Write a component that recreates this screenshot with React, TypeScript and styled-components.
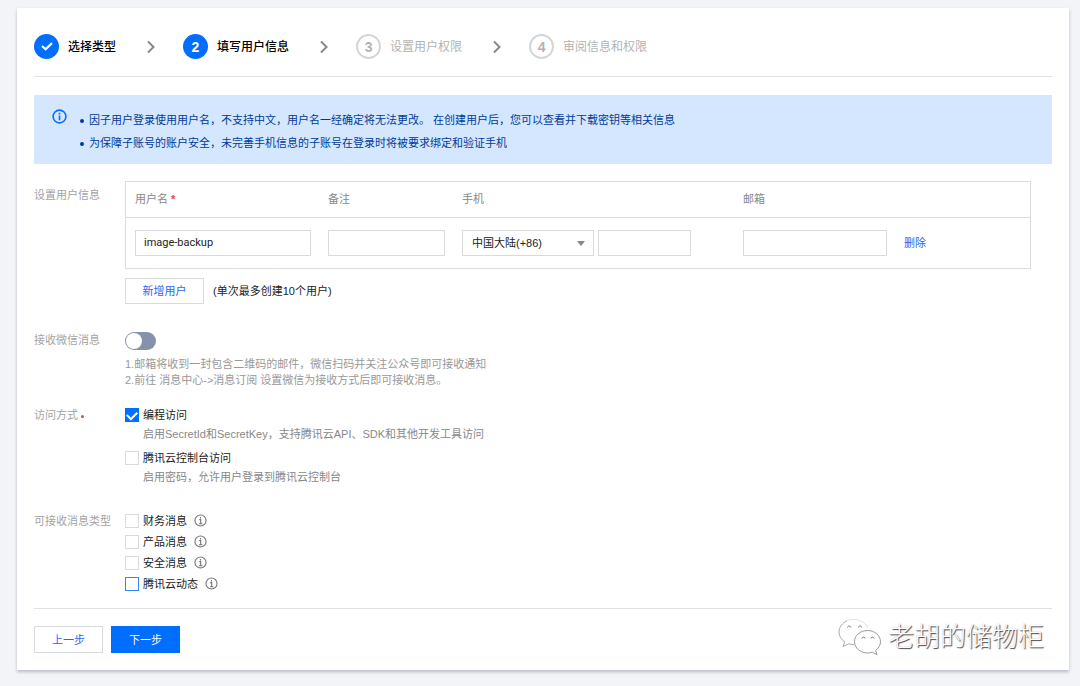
import React from 'react';
import styled, { createGlobalStyle, css } from 'styled-components';

const GlobalStyle = createGlobalStyle`
  * { box-sizing: border-box; }
  body {
    margin: 0;
    background: #f2f4f8;
    color: #222;
    font-family: "Liberation Sans", "Noto Sans CJK SC", sans-serif;
    font-size: 11px;
    line-height: 16px;
  }
  button, input, select { font: inherit; color: inherit; }
`;

const Card = styled.main`
  margin: 8px 11px 16px 17px;
  padding: 0 17px;
  background: #fff;
  box-shadow: 0 2px 3px rgba(54, 58, 80, 0.3);
`;

const Steps = styled.ol`
  display: flex;
  align-items: center;
  margin: 0;
  padding: 26px 0 17px;
  list-style: none;
  border-bottom: 1px solid #e0e0e0;
`;

const Step = styled.li<{ $pending?: boolean }>`
  display: flex;
  align-items: center;
  gap: 9px;
  font-size: 12px;
  font-weight: ${p => (p.$pending ? 400 : 500)};
  color: ${p => (p.$pending ? '#b3b3b3' : '#000')};
`;

const StepMark = styled.span<{ $pending?: boolean }>`
  display: flex;
  align-items: center;
  justify-content: center;
  width: 25px;
  height: 25px;
  border-radius: 50%;
  font-size: 14px;
  font-weight: 700;
  ${p =>
    p.$pending
      ? css`border: 2px solid #d5d5d5; color: #b3b3b3;`
      : css`background: #006eff; color: #fff;`}
`;

const StepArrow = styled.svg`
  width: 8px;
  height: 14px;
  margin: 0 28px 0 31px;
  fill: none;
  stroke: #888;
  stroke-width: 2;
`;

const Notice = styled.section`
  display: flex;
  align-items: flex-start;
  margin-top: 18px;
  padding: 14px 18px 9px;
  background: #d5e7ff;
  color: #003b9a;
`;

const NoticeList = styled.ul`
  margin: 0;
  padding: 0 0 0 8px;
  list-style: none;
  line-height: 23px;
`;

const NoticeItem = styled.li`
  display: flex;
  align-items: center;
  gap: 5px;
  &::before {
    content: "";
    width: 4px;
    height: 4px;
    margin-left: 5px;
    border-radius: 50%;
    background: #003b9a;
  }
`;

const InfoSvg = styled.svg<{ $blue?: boolean }>`
  flex: none;
  width: ${p => (p.$blue ? 15 : 13)}px;
  height: ${p => (p.$blue ? 15 : 13)}px;
  fill: none;
  stroke: ${p => (p.$blue ? '#006eff' : '#777')};
  stroke-width: ${p => (p.$blue ? 1.6 : 1.3)};
`;

const FormRow = styled.section<{ $gap: number; $labelTop?: number }>`
  display: grid;
  grid-template-columns: 91px minmax(0, 1fr);
  margin-top: ${p => p.$gap}px;
  > :first-child { padding-top: ${p => p.$labelTop ?? 0}px; }
`;

const RowLabel = styled.div`
  color: #a3a3a3;
`;

const Required = styled.span`
  color: #e54545;
  font-weight: 700;
`;

const RequiredDot = styled.span`
  display: inline-block;
  width: 3px;
  height: 3px;
  margin-left: 3px;
  border-radius: 50%;
  background: #e54545;
  vertical-align: middle;
`;

const TableFrame = styled.div`
  margin-right: 21px;
  border: 1px solid #dcdcdc;
`;

const UserTable = styled.table`
  width: 100%;
  table-layout: fixed;
  border-collapse: collapse;
  th, td { padding: 0 0 0 9px; text-align: left; font-weight: 400; }
  th { height: 35px; color: #888; }
  td { height: 51px; border-top: 1px solid #dcdcdc; }
`;

const Col = styled.col<{ $w?: number }>`
  width: ${p => (p.$w ? `${p.$w}px` : 'auto')};
`;

const PhoneFields = styled.div`
  display: flex;
  gap: 4px;
`;

const TextInput = styled.input<{ $w: number }>`
  display: block;
  width: ${p => p.$w}px;
  height: 26px;
  padding: 0 8px;
  border: 1px solid #d8dbdd;
  border-radius: 0;
  background: #fff;
  font-family: Roboto, "Noto Sans CJK SC", sans-serif;
`;

const SelectBox = styled.div`
  position: relative;
  width: 132px;
  svg {
    position: absolute;
    right: 9px;
    top: 11px;
    width: 8px;
    height: 5px;
    fill: #888;
    pointer-events: none;
  }
`;

const Select = styled.select`
  display: block;
  width: 100%;
  height: 26px;
  padding: 0 20px 0 9px;
  appearance: none;
  border: 1px solid #d8dbdd;
  border-radius: 0;
  background: #fff;
`;

const TextLink = styled.a`
  color: #2b66f6;
  text-decoration: none;
`;

const AddLine = styled.div`
  display: flex;
  align-items: center;
  gap: 9px;
  margin-top: 9px;
`;

const Button = styled.button<{ $primary?: boolean; $wide?: boolean }>`
  width: ${p => (p.$wide ? 79 : 69)}px;
  height: ${p => (p.$wide ? 26 : 27)}px;
  padding: 0;
  border: 1px solid ${p => (p.$primary ? '#006eff' : '#d8dbdd')};
  background: ${p => (p.$primary ? '#006eff' : '#fff')};
  color: ${p => (p.$primary ? '#fff' : '#2b66f6')};
`;

const Switch = styled.input`
  appearance: none;
  display: block;
  width: 31px;
  height: 18px;
  margin: 0 0 6px;
  padding: 1px;
  border-radius: 9px;
  background: #8493ab;
  &::before {
    content: "";
    display: block;
    width: 16px;
    height: 16px;
    border-radius: 50%;
    background: #fff;
  }
  &:checked { background: #006eff; }
  &:checked::before { margin-left: 13px; }
`;

const Hint = styled.p`
  margin: 0;
  color: #999;
`;

const Option = styled.div`
  & + & { margin-top: 8px; }
  ${Hint} { margin: 3px 0 0 18px; color: #888; }
`;

const CheckLabel = styled.label`
  display: flex;
  align-items: center;
  gap: 4px;
`;

const CheckLine = styled.div`
  display: flex;
  align-items: center;
  gap: 7px;
  height: 21px;
`;

const Check = styled.input<{ $active?: boolean }>`
  appearance: none;
  display: grid;
  place-items: center;
  width: 14px;
  height: 14px;
  margin: 0;
  border: 1px solid ${p => (p.$active ? '#2f86ff' : '#d8dbdd')};
  background: #fff;
  &:checked { background: #006eff; border-color: #006eff; }
  &:checked::before {
    content: "";
    width: 8px;
    height: 5px;
    margin-bottom: 2px;
    border: solid #fff;
    border-width: 0 0 2px 2px;
    transform: rotate(-45deg);
  }
`;

const Footer = styled.footer`
  position: relative;
  display: flex;
  gap: 8px;
  margin-top: 14px;
  padding: 17px 0;
  border-top: 1px solid #e0e0e0;
`;

const Watermark = styled.div`
  position: absolute;
  top: 8px;
  right: 8px;
  display: flex;
  align-items: center;
  gap: 7px;
  color: #fff;
  font-size: 26px;
  font-weight: 300;
  line-height: 40px;
  text-shadow: 1px 1px 1px #444, 0 0 1px #bbb;
  svg { width: 43px; height: 38px; }
`;

const InfoIcon = ({ blue }: { blue?: boolean }) => (
  <InfoSvg $blue={blue} viewBox="0 0 15 15" aria-hidden="true">
    <circle cx="7.5" cy="7.5" r="6.4" />
    {blue ? (
      <path d="M7.5 6.4v4.8M7.5 3.7v1.700" />
    ) : (
      <path d="M6 6.500h1.700v4.600M5.700 11.300h4M7.500 3.500v1.700" />
    )}
  </InfoSvg>
);

const Arrow = () => (
  <StepArrow viewBox="0 0 8 14" aria-hidden="true">
    <path d="M1 1.5 6.5 7 1 12.5" />
  </StepArrow>
);

const messageTypes = ['财务消息', '产品消息', '安全消息', '腾讯云动态'];

export default function App() {
  return (
    <>
      <GlobalStyle />
      <Card lang="zh-CN">
        <Steps>
          <Step>
            <StepMark>
              <svg width="12" height="9" viewBox="0 0 12 9" fill="none" stroke="#fff" strokeWidth="2.3">
                <path d="M1 4 4.600 7.300 11 1.200" />
              </svg>
            </StepMark>
            选择类型
          </Step>
          <Arrow />
          <Step><StepMark>2</StepMark>填写用户信息</Step>
          <Arrow />
          <Step $pending><StepMark $pending>3</StepMark>设置用户权限</Step>
          <Arrow />
          <Step $pending><StepMark $pending>4</StepMark>审阅信息和权限</Step>
        </Steps>

        <Notice>
          <InfoIcon blue />
          <NoticeList>
            <NoticeItem>因子用户登录使用用户名，不支持中文，用户名一经确定将无法更改。 在创建用户后，您可以查看并下载密钥等相关信息</NoticeItem>
            <NoticeItem>为保障子账号的账户安全，未完善手机信息的子账号在登录时将被要求绑定和验证手机</NoticeItem>
          </NoticeList>
        </Notice>

        <FormRow $gap={17} $labelTop={6}>
          <RowLabel>设置用户信息</RowLabel>
          <div>
            <TableFrame>
              <UserTable>
                <colgroup>
                  <Col $w={193} /><Col $w={134} /><Col $w={281} /><Col $w={161} /><Col />
                </colgroup>
                <thead>
                  <tr>
                    <th>用户名 <Required>*</Required></th>
                    <th>备注</th>
                    <th>手机</th>
                    <th>邮箱</th>
                    <th aria-label="操作" />
                  </tr>
                </thead>
                <tbody>
                  <tr>
                    <td><TextInput $w={176} aria-label="用户名" defaultValue="image-backup" /></td>
                    <td><TextInput $w={117} aria-label="备注" /></td>
                    <td>
                      <PhoneFields>
                        <SelectBox>
                          <Select aria-label="国家或地区"><option>中国大陆(+86)</option></Select>
                          <svg viewBox="0 0 8 5"><path d="M0 0h8L4 5z" /></svg>
                        </SelectBox>
                        <TextInput $w={93} aria-label="手机" type="tel" />
                      </PhoneFields>
                    </td>
                    <td><TextInput $w={144} aria-label="邮箱" type="email" /></td>
                    <td><TextLink href="#">删除</TextLink></td>
                  </tr>
                </tbody>
              </UserTable>
            </TableFrame>
            <AddLine>
              <Button type="button" $wide>新增用户</Button>
              <span>(单次最多创建10个用户)</span>
            </AddLine>
          </div>
        </FormRow>

        <FormRow $gap={28}>
          <RowLabel as="label" htmlFor="wechat">接收微信消息</RowLabel>
          <div>
            <Switch id="wechat" type="checkbox" role="switch" />
            <Hint>1.邮箱将收到一封包含二维码的邮件，微信扫码并关注公众号即可接收通知</Hint>
            <Hint>2.前往 消息中心-&gt;消息订阅 设置微信为接收方式后即可接收消息。</Hint>
          </div>
        </FormRow>

        <FormRow $gap={19}>
          <RowLabel>访问方式<RequiredDot /></RowLabel>
          <div>
            <Option>
              <CheckLabel><Check type="checkbox" defaultChecked />编程访问</CheckLabel>
              <Hint>启用SecretId和SecretKey，支持腾讯云API、SDK和其他开发工具访问</Hint>
            </Option>
            <Option>
              <CheckLabel><Check type="checkbox" />腾讯云控制台访问</CheckLabel>
              <Hint>启用密码，允许用户登录到腾讯云控制台</Hint>
            </Option>
          </div>
        </FormRow>

        <FormRow $gap={25} $labelTop={3}>
          <RowLabel>可接收消息类型</RowLabel>
          <div>
            {messageTypes.map((name, i) => (
              <CheckLine key={name}>
                <CheckLabel><Check type="checkbox" $active={i === 3} />{name}</CheckLabel>
                <InfoIcon />
              </CheckLine>
            ))}
          </div>
        </FormRow>

        <Footer>
          <Button type="button">上一步</Button>
          <Button type="button" $primary>下一步</Button>
          <Watermark>
            <svg viewBox="0 0 43 38" fill="#fff" stroke="#999" strokeWidth="1" strokeLinejoin="round">
              <path d="M16 1.500C7.700 1.500 1 7 1 14c0 4 2.200 7.400 5.600 9.700L5.200 28.500l5.400-2.700c1.700.5 3.500.8 5.400.8 8.300 0 15-5.500 15-12.500S24.300 1.500 16 1.500z" stroke="none" />
              <path d="M9 2.800C4.200 5 1 9.200 1 14c0 4 2.200 7.400 5.600 9.700L5.200 28.500l5.400-2.700c1.700.5 3.500.8 5.400.8" stroke="#aaa" />
              <path d="M9 2.800C15 0 26 1 30 10" fill="none" stroke="#e2e2e2" />
              <path d="M29.500 12.500C22.300 12.500 16.500 17.500 16.500 23.700S22.300 35 29.500 35c1.700 0 3.300-.3 4.800-.8l4.700 2.500-1.300-4.300c2.900-2.100 4.800-5.200 4.800-8.700 0-6.200-5.800-11.200-13-11.200z" />
              <path d="M9.500 9.500c.3-2 3-2 3.300 0M20.500 9.500c.3-2 3-2 3.300 0M24 20.500c.2-1.800 2.800-1.800 3 0M33 20.500c.2-1.800 2.800-1.800 3 0" fill="none" stroke="#777" />
            </svg>
            <span>老胡的储物柜</span>
          </Watermark>
        </Footer>
      </Card>
    </>
  );
}
